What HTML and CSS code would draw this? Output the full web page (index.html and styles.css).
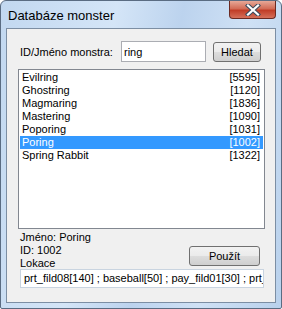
FILE: index.html
```html
<!DOCTYPE html>
<html lang="cs">
<head>
    <meta charset="UTF-8">
    <title>Databáze monster</title>
    <link rel="stylesheet" href="styles.css">
</head>
<body>
    <div class="window">
        <div class="titlebar">
            <span class="title">Databáze monster</span>
            <div class="close">
                <svg width="20" height="12" viewBox="0 0 20 12">
                    <path d="M5 1.5 L15 10.5 M15 1.5 L5 10.5" stroke="#3c4a5c" stroke-width="4.2" stroke-linecap="square"/>
                    <path d="M5 1.5 L15 10.5 M15 1.5 L5 10.5" stroke="#ffffff" stroke-width="2.2" stroke-linecap="square"/>
                </svg>
            </div>
        </div>
        <div class="client">
            <div class="search">
                <label class="label">ID/Jméno monstra:</label>
                <input class="field" type="text" value="ring">
                <button class="btn btn-search">Hledat</button>
            </div>
            <ul class="list">
                <li class="row"><span>Evilring</span><span>[5595]</span></li>
                <li class="row"><span>Ghostring</span><span>[1120]</span></li>
                <li class="row"><span>Magmaring</span><span>[1836]</span></li>
                <li class="row"><span>Mastering</span><span>[1090]</span></li>
                <li class="row"><span>Poporing</span><span>[1031]</span></li>
                <li class="row selected"><span>Poring</span><span>[1002]</span></li>
                <li class="row"><span>Spring Rabbit</span><span>[1322]</span></li>
            </ul>
            <div class="info">
                <div class="details">
                    <div>Jméno: Poring</div>
                    <div>ID: 1002</div>
                    <div>Lokace</div>
                </div>
                <button class="btn btn-use">Použít</button>
            </div>
            <div class="locations">prt_fild08[140] ; baseball[50] ; pay_fild01[30] ; prt_fild01[10]</div>
        </div>
    </div>
</body>
</html>
```

FILE: styles.css
```css
body {
    margin: 0;
    background: #ffffff;
    font-family: "Liberation Sans", Arial, sans-serif;
    font-size: 11px;
    color: #000;
}
.window {
    width: 280px;
    height: 307px;
    border: 1px solid #5a6c82;
    border-radius: 6px 6px 2px 2px;
    background: linear-gradient(100deg, #c2d8f0 0%, #d4e5f7 35%, #bcd3ee 55%, #cfe1f5 75%, #b9d1ec 100%);
    overflow: hidden;
}
.titlebar {
    height: 27px;
    display: flex;
    justify-content: space-between;
    align-items: flex-start;
}
.title {
    font-size: 13px;
    padding: 7px 0 0 7px;
    color: #000;
}
.close {
    width: 45px;
    height: 17px;
    margin-right: 5px;
    border: 1px solid #6b2a22;
    border-top: none;
    border-radius: 0 0 4px 4px;
    background: linear-gradient(#e7a897 0%, #d26c56 45%, #c13d27 55%, #d5705a 100%);
    display: flex;
    align-items: center;
    justify-content: center;
}
.client {
    height: 273px;
    margin: 0 5px;
    border: 1px solid #7c8ea3;
    background: #f0f0f0;
}
.search {
    display: flex;
    align-items: center;
    margin: 12px 0 0 13px;
}
.label {
    width: 101px;
}
.field {
    width: 79px;
    height: 15px;
    padding: 2px;
    margin: 0;
    border: 1px solid #abadb3;
    font: inherit;
    font-size: 11px;
}
.btn {
    font-family: inherit;
    font-size: 11px;
    border: 1px solid #707070;
    border-radius: 3px;
    background: linear-gradient(#f2f2f2 0%, #ebebeb 49%, #dddddd 50%, #cfcfcf 100%);
    padding: 0;
    color: #000;
}
.btn-search {
    width: 48px;
    height: 20px;
    margin-left: 7px;
}
.list {
    list-style: none;
    width: 243px;
    height: 156px;
    margin: 7px 0 0 11px;
    padding: 1px;
    border: 1px solid #828790;
    background: #fff;
}
.row {
    display: flex;
    justify-content: space-between;
    height: 13px;
    line-height: 13px;
    padding: 0 3px 0 2px;
}
.selected {
    background: #3399ff;
    color: #fff;
}
.info {
    display: flex;
    justify-content: space-between;
    margin: 2px 0 0 13px;
    width: 240px;
    height: 38px;
}
.details {
    line-height: 13px;
}
.btn-use {
    width: 71px;
    height: 20px;
    margin-top: 15px;
}
.locations {
    width: 236px;
    height: 17px;
    line-height: 17px;
    margin-left: 13px;
    padding: 0 3px;
    border: 1px solid #c9d4e0;
    background: #fff;
    white-space: nowrap;
    overflow: hidden;
}
```
